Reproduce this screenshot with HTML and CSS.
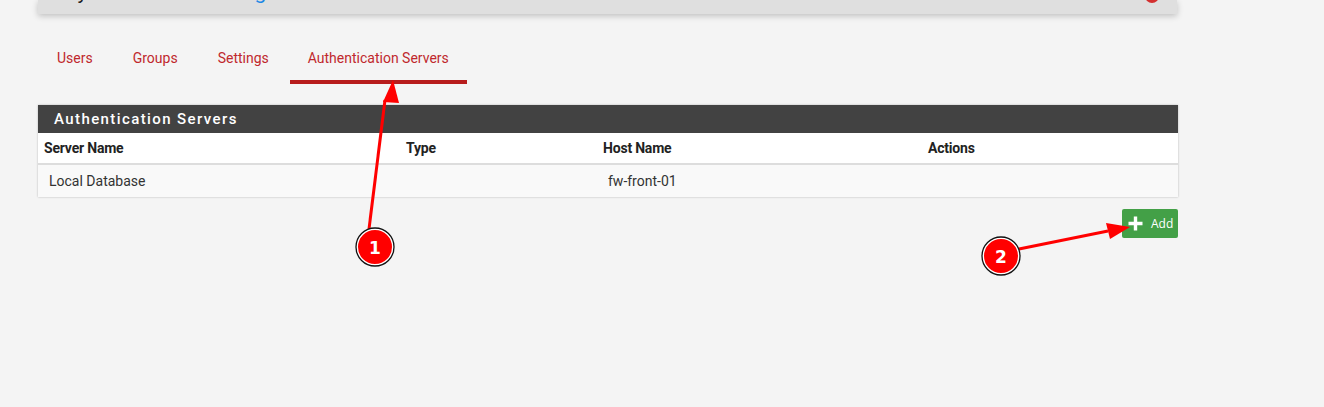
FILE: index.html
```html
<!DOCTYPE html>
<html>
<head>
<meta charset="utf-8">
<link rel="stylesheet" href="styles.css">
</head>
<body>
<div class="page">
  <div class="topbar">
    <div class="crumbs"><span class="dark">System</span> <span class="sep">/</span> <span class="link">User Manager</span> <span class="sep">/</span> <span class="dark">Authentication Servers</span></div>
    <span class="help"></span>
  </div>

  <ul class="tabs">
    <li class="tab">Users</li>
    <li class="tab">Groups</li>
    <li class="tab">Settings</li>
    <li class="tab active">Authentication Servers</li>
  </ul>

  <div class="panel">
    <div class="panel-heading">Authentication Servers</div>
    <table class="grid">
      <colgroup>
        <col class="c1"><col class="c2"><col class="c3"><col class="c4">
      </colgroup>
      <thead>
        <tr><th>Server Name</th><th>Type</th><th>Host Name</th><th>Actions</th></tr>
      </thead>
      <tbody>
        <tr><td>Local Database</td><td></td><td>fw-front-01</td><td></td></tr>
      </tbody>
    </table>
  </div>

  <div class="actions">
    <button class="btn-add"><svg class="plus" width="15" height="15" viewBox="0 0 15 15"><path d="M7.5 0.5v14M0.5 7.5h14" stroke="#fff" stroke-width="3.4"/></svg><span>Add</span></button>
  </div>
</div>

<svg class="annot" width="1324" height="407" viewBox="0 0 1324 407">
  <line x1="369" y1="229" x2="385" y2="100" stroke="#ff0000" stroke-width="3"/>
  <path d="M393 80 L383 102 L399 103 z" fill="#ff0000"/>
  <line x1="1019" y1="249" x2="1108" y2="231" stroke="#ff0000" stroke-width="3"/>
  <path d="M1130 227 L1106 223 L1110 239 z" fill="#ff0000"/>
  <circle cx="375" cy="247" r="18" fill="#ff0000" stroke="#fff" stroke-width="2"/>
  <circle cx="375" cy="247" r="19" fill="none" stroke="#111" stroke-width="1.3"/>
  <text x="375" y="253.5" class="num">1</text>
  <circle cx="1001" cy="256" r="18" fill="#ff0000" stroke="#fff" stroke-width="2"/>
  <circle cx="1001" cy="256" r="19" fill="none" stroke="#111" stroke-width="1.3"/>
  <text x="1001" y="262.5" class="num">2</text>
</svg>
</body>
</html>
```
FILE: styles.css
```css
html, body {
  margin: 0;
  padding: 0;
  background: #f4f4f4;
  font-family: Roboto, "Liberation Sans", sans-serif;
  width: 1324px;
  height: 407px;
  overflow: hidden;
}
.page {
  width: 1140px;
  margin-left: 38px;
  position: relative;
}
.topbar {
  height: 14px;
  background: #dfdfdf;
  box-shadow: 0 2px 6px rgba(0,0,0,0.22);
  overflow: hidden;
  position: relative;
  width: 1139px;
}
.crumbs {
  font-size: 21px;
  line-height: 21px;
  margin-top: -18px;
  padding-left: 27px;
  white-space: nowrap;
}
.crumbs .dark { color: #222; }
.crumbs .link { color: #1e88e5; }
.crumbs .sep { color: #777; }
.help {
  position: absolute;
  right: 18px;
  top: -11px;
  width: 14px;
  height: 14px;
  border-radius: 50%;
  background: #d32f2f;
}
.tabs {
  list-style: none;
  margin: 36px 0 0 0;
  padding: 0;
  display: flex;
  height: 30px;
}
.tab {
  font-size: 14px;
  color: #c0282d;
  padding: 0 21px 0 19px;
  height: 30px;
  line-height: 17px;
}
.tab.active {
  border-bottom: 4px solid #b71c1c;
  margin-left: 0;
  padding: 0 18px;
}
.panel {
  margin-top: 25px;
  background: #fff;
  box-shadow: 0 0 2px rgba(0,0,0,0.25);
}
.panel-heading {
  background: #424242;
  color: #fff;
  font-size: 15px;
  font-weight: 500;
  letter-spacing: 1.4px;
  height: 28px;
  line-height: 28px;
  padding-left: 16px;
}
.grid {
  width: 100%;
  border-collapse: collapse;
  table-layout: fixed;
  font-size: 14px;
  color: #222;
}
.c1 { width: 362px; }
.c2 { width: 197px; }
.c3 { width: 325px; }
.c4 { width: 256px; }
.grid th {
  text-align: left;
  font-weight: 700;
  height: 30px;
  padding: 0 0 0 6px;
  background: #fff;
  border-bottom: 2px solid #dddddd;
  letter-spacing: -0.2px;
}
.grid td {
  height: 32px;
  padding: 0 0 0 11px;
  background: #f9f9f9;
  color: #333;
}
.actions {
  display: flex;
  justify-content: flex-end;
  margin-top: 12px;
}
.btn-add {
  width: 56px;
  height: 29px;
  background: #43a047;
  border: 0;
  border-radius: 2px;
  color: #fff;
  font-family: "Open Sans", "DejaVu Sans", sans-serif;
  font-size: 12px;
  display: flex;
  align-items: center;
  padding: 0 0 0 6px;
  gap: 8px;
}
.plus { flex: none; }
.annot {
  position: absolute;
  left: 0;
  top: 0;
  pointer-events: none;
}
.num {
  font-family: "DejaVu Sans", sans-serif;
  font-weight: 700;
  font-size: 17px;
  fill: #fff;
  text-anchor: middle;
}
```
